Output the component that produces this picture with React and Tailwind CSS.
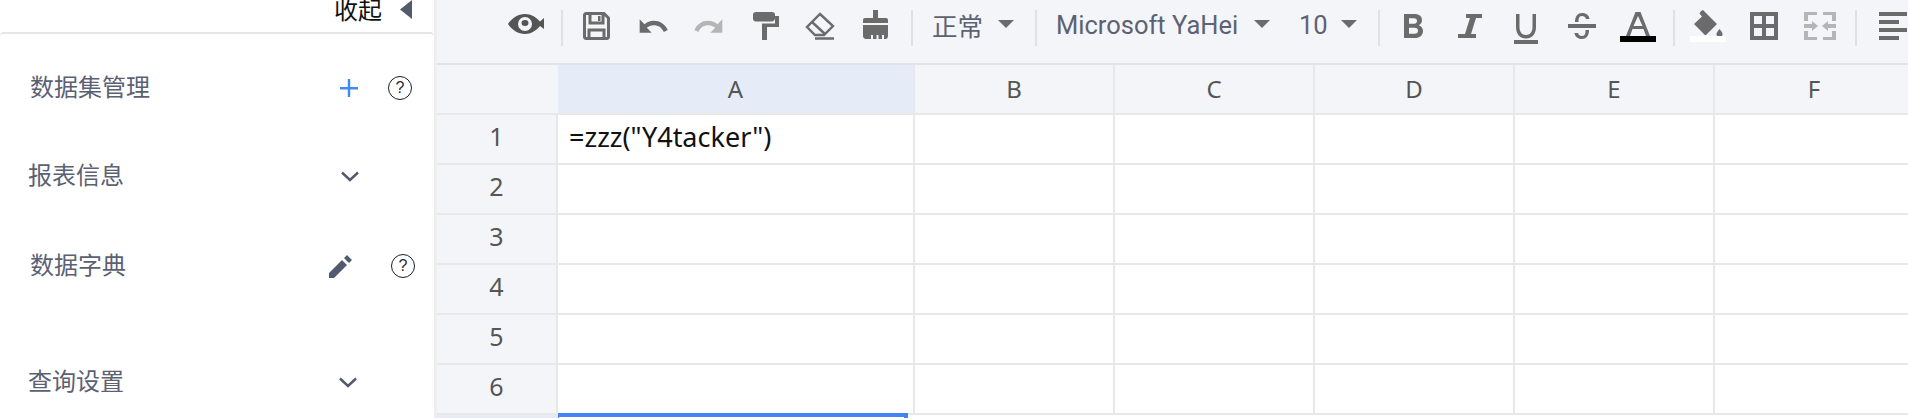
import React from "react";

const ICON = "#6b6b6b";

const Sep = ({ className }) => <div className={`w-[2px] h-[36px] bg-[#e0e1e4] shrink-0 ${className}`} />;

const Ic = ({ w, h, vb, className = "", fill = ICON, children }) => (
  <svg width={w} height={h} viewBox={vb} fill={fill} className={`shrink-0 ${className}`}>{children}</svg>
);

const Caret = ({ className }) => (
  <Ic w={16} h={8} vb="0 0 16 8" className={className} fill="#6b6b6b"><path d="M0 0h16L8 8z" /></Ic>
);

const Question = ({ className }) => (
  <div className={`w-[24px] h-[24px] rounded-full border border-[#1c1c28] flex items-center justify-center text-[16px] leading-none text-[#2a2a35] shrink-0 font-['Liberation_Sans',sans-serif] ${className}`}>?</div>
);

const Chevron = ({ className }) => (
  <svg width="18" height="11" viewBox="0 0 18 11" fill="none" stroke="#525a6e" strokeWidth="2.4" className={`shrink-0 ${className}`}><path d="M1 1.5l8 7.5 8-7.5" /></svg>
);

function Toolbar() {
  return (
    <div className="h-[65px] bg-[#f4f5f8] border-b-2 border-[#e2e3e6] flex items-start overflow-hidden font-['Roboto',sans-serif] text-[25.5px] text-[#5c6272] whitespace-nowrap">
      <Ic w={36} h={22} vb="0 0 36 22" className="ml-[71px] mt-[13px]" fill="#555555">
        <path d="M17 1C10 1 4 5 0 11c4 6 10 10 17 10 6 0 11-3.500 15-8l4 3V5l-4 3.500C28 4 23 1 17 1zm0 17a7 7 0 110-14 7 7 0 010 14zm-3.500-8a3.500 3 0 107 0 3.500 3 0 00-7 0z" />
      </Ic>
      <Sep className="ml-[17px] mt-[10px]" />
      <Ic w={27} h={28} vb="0 0 27 28" className="ml-[20px] mt-[12px]" fill="none">
        <path d="M3 1.500h18l4.500 4.500v19a1.500 1.500 0 01-1.500 1.500H3A1.500 1.500 0 011.500 25V3A1.500 1.500 0 013 1.500z" stroke={ICON} strokeWidth="3" />
        <path d="M7 2v9h13V2M6 27v-9h15v9" stroke={ICON} strokeWidth="3" />
        <path d="M15 4h2.500v5H15z" fill={ICON} />
      </Ic>
      <Ic w={32} h={16} vb="0 0 24 12" className="ml-[27px] mt-[18px]">
        <path d="M12.500 2C9.850 2 7.450 2.990 5.600 4.600L2 1v10h9L7.380 7.380C8.770 6.220 10.540 5.500 12.500 5.500c3.540 0 5.800 1.500 7.600 5l3-1.500C21 4.500 17.150 2 12.500 2z" />
      </Ic>
      <Ic w={32} h={16} vb="0 0 24 12" className="ml-[24px] mt-[18px]" fill="#b5b5b5">
        <path d="M18.400 4.600C16.550 2.990 14.150 2 11.500 2 6.850 2 3 4.500 1 9l3 1.500c1.800-3.500 4-5 7.500-5 1.950 0 3.730.72 5.120 1.880L13 11h9V1l-3.600 3.600z" />
      </Ic>
      <Ic w={26} h={28} vb="0 0 26 28" className="ml-[28px] mt-[12px]">
        <path d="M3 0h16a3 3 0 013 3v1H26v11H14v13H9V11.500h13V7h-.200A3 3 0 0119 9.500H3a3 3 0 01-3-3V3a3 3 0 013-3z" />
      </Ic>
      <Ic w={30} h={28} vb="0 0 30 28" className="ml-[26px] mt-[12px]" fill="none">
        <path d="M15 2L28 14 19 23H10L2 15z" stroke={ICON} strokeWidth="2.400" />
        <path d="M7 10l13 12M10 26.500h19" stroke={ICON} strokeWidth="2.400" />
      </Ic>
      <Ic w={25} h={29} vb="0 0 25 29" className="ml-[28px] mt-[10px]">
        <path d="M10 0h5v8h8a2 2 0 012 2v3H0v-3a2 2 0 012-2h8zM0 15h25v11c0 1.500-1 3-2 3h-2v-4h-2v4h-3.500v-4h-2v4H10v-4H8v4H3c-2 0-3-1.500-3-3z" />
      </Ic>
      <Sep className="ml-[23px] mt-[10px]" />
      <span className="ml-[19px] mt-[8px] leading-[34px] w-[51px] font-['Noto_Sans_CJK_SC',sans-serif]">正常</span>
      <Caret className="ml-[15px] mt-[20px]" />
      <Sep className="ml-[21px] mt-[10px]" />
      <span className="ml-[19px] mt-[10px] leading-[30px] w-[183px]">Microsoft YaHei</span>
      <Caret className="ml-[15px] mt-[20px]" />
      <span className="ml-[29px] mt-[10px] leading-[30px] w-[27px]">10</span>
      <Caret className="ml-[15px] mt-[20px]" />
      <Sep className="ml-[21px] mt-[10px]" />
      <Ic w={19} h={24} vb="0 0 19 24" className="ml-[24px] mt-[14px]">
        <path fillRule="evenodd" d="M0 0h10.500C15 0 18 2.200 18 6c0 2.500-1.200 4.200-3.200 5.200C17.500 12.200 19 14.300 19 17c0 4.500-3.500 7-8 7H0zm5 4.200v5.600h5c2 0 3-1.200 3-2.800S12 4.200 10 4.200zm0 9.600v6h5.500c2.300 0 3.500-1.300 3.500-3s-1.200-3-3.500-3z" />
      </Ic>
      <Ic w={24} h={24} vb="0 0 24 24" className="ml-[35px] mt-[14px]">
        <path d="M8 0h16v4h-6l-5 16h5v4H0v-4h7l5-16H8z" />
      </Ic>
      <Ic w={24} h={30} vb="0 0 24 30" className="ml-[32px] mt-[14px]">
        <path d="M2 0h3.500v13c0 5 2.500 8 6.500 8s6.500-3 6.500-8V0H22v13c0 7-4 11.500-10 11.500S2 20 2 13zM0 26h24v4H0z" />
      </Ic>
      <Ic w={28} h={26} vb="0 0 28 26" className="ml-[30px] mt-[13px]" >
        <path d="M0 11h28v4H0z" />
        <path d="M7 9c0-6 3-9 7-9 4.500 0 7 2.500 7.500 6H18c-.5-2-2-3-4-3-2.500 0-3.500 2-3.500 4.500V9zM21 17c0 6-3 9-7 9-4.500 0-7-2.500-7.500-6H10c.5 2 2 3 4 3 2.500 0 3.500-2 3.500-4.500V17z" />
      </Ic>
      <Ic w={36} h={30} vb="0 0 36 30" className="ml-[24px] mt-[12px]">
        <path fillRule="evenodd" d="M15.500 0h5L30 24h-4l-2.500-7h-11L10 24H6zM18 4l-4.500 10h9z" />
        <path d="M0 24h36v6H0z" fill="#000" />
      </Ic>
      <Sep className="ml-[17px] mt-[10px]" />
      <Ic w={36} h={32} vb="0 0 36 32" className="ml-[15px] mt-[10px]">
        <path d="M11 1l2-1 14 14-10.500 10.500a1.500 1.500 0 01-2.100 0L4 14 12 6.500 9.500 3.500z" />
        <path d="M29.500 19s3 3.300 3 5a3 3 0 01-6 0c0-1.700 3-5 3-5z" />
        <path d="M0 26h36v6H0z" fill="#fff" />
      </Ic>
      <Ic w={28} h={28} vb="0 0 28 28" className="ml-[24px] mt-[12px]">
        <path fillRule="evenodd" d="M0 0h28v28H0zM4 4v8h8V4zm12 0v8h8V4zM4 16v8h8v-8zm12 0v8h8v-8z" />
      </Ic>
      <Ic w={32} h={28} vb="0 0 32 28" className="ml-[26px] mt-[12px]" fill="#b5b5b5">
        <path d="M0 0h13v3H4v6H0zM19 0h13v9h-4V3h-9zM0 19h4v6h9v3H0zM28 19h4v9H19v-3h9zM0 12h8V9l6 5-6 5v-3H0zM32 12h-8V9l-6 5 6 5v-3h8z" />
      </Ic>
      <Sep className="ml-[19px] mt-[10px]" />
      <Ic w={28} h={28} vb="0 0 28 28" className="ml-[22px] mt-[12px]">
        <path d="M0 0h28v4H0zM0 8h20v4H0zM0 16h28v4H0zM0 24h20v4H0z" />
      </Ic>
    </div>
  );
}

const COLS = ["A", "B", "C", "D", "E", "F"];
const ROWS = [1, 2, 3, 4, 5, 6];

function Grid() {
  return (
    <div className="grid grid-cols-[121px_357px_200px_200px_200px_200px_200px] auto-rows-[50px] font-['Noto_Sans',sans-serif] text-[24px] text-[#555555]">
      <div className="bg-[#f4f5f8] border-b-2 border-[#e8e8e8]" />
      {COLS.map((c, i) => (
        <div key={c} className={`flex items-center justify-center border-b-2 border-r-2 border-[#e8e8e8] ${i === 0 ? "bg-[#e6ecf7]" : "bg-[#f4f5f8]"}`}>{c}</div>
      ))}
      {ROWS.map((r) => (
        <React.Fragment key={r}>
          <div className="flex items-center justify-center bg-[#f4f5f8] border-b-2 border-r-2 border-[#e8e8e8] pb-[4px] text-[25px]">{r}</div>
          {COLS.map((c, i) => (
            <div key={c} className="flex items-center border-b-2 border-r-2 border-[#e8e8e8] bg-white pl-[11px] pb-[4px] text-[27px] text-[#111111] whitespace-nowrap">
              {r === 1 && i === 0 ? '=zzz("Y4tacker")' : ""}
            </div>
          ))}
        </React.Fragment>
      ))}
      <div className="bg-[#e6ecf7] border-r-2 border-[#e8e8e8]" />
      <div className="border-t-4 border-l border-r-4 border-[#4285f4] -mt-[2px] mr-[7px] bg-white" />
    </div>
  );
}

const Row = ({ h, children }) => <div className={`flex items-center ${h}`}>{children}</div>;

const Label = ({ className, children }) => (
  <span className={`text-[24px] leading-none text-[#5b6172] pb-[5px] ${className}`}>{children}</span>
);

function Sidebar() {
  return (
    <div className="w-[437px] h-[418px] shrink-0 border-r-[3px] border-[#eeeeee] overflow-hidden font-['Noto_Sans_CJK_SC',sans-serif]">
      <div className="h-[32px] flex items-start">
        <span className="ml-[334px] text-[24px] leading-none -mt-[3px] text-[#111111] whitespace-nowrap">收起</span>
        <svg width="12" height="19" viewBox="0 0 12 19" className="ml-[18px]"><path d="M12 0v19L0 9.500z" fill="#525a6e" /></svg>
      </div>
      <div className="border-t-2 border-[#e6e6e6] rounded-t-[4px]">
        <Row h="h-[108px]">
          <Label className="ml-[30px] w-[120px]">数据集管理</Label>
          <svg width="18" height="18" viewBox="0 0 18 18" className="ml-[190px]"><path d="M0 8h18v2.400H0zM7.800 0h2.400v18H7.800z" fill="#3d8bf2" /></svg>
          <Question className="ml-[30px]" />
        </Row>
        <Row h="h-[68px]">
          <Label className="ml-[28px] w-[96px]">报表信息</Label>
          <Chevron className="ml-[217px]" />
        </Row>
        <Row h="h-[112px]">
          <Label className="ml-[30px] w-[96px]">数据字典</Label>
          <svg width="23" height="23" viewBox="0 0 23 23" className="ml-[203px]"><path d="M0 18l13-13 5 5L5 23H0zM15 3l3-3 5 5-3 3z" fill="#525a6e" /></svg>
          <Question className="ml-[39px]" />
        </Row>
        <Row h="h-[120px]">
          <Label className="ml-[28px] w-[96px]">查询设置</Label>
          <Chevron className="ml-[215px]" />
        </Row>
      </div>
    </div>
  );
}

export default function App() {
  return (
    <div className="w-[1908px] h-[418px] overflow-hidden flex bg-white">
      <Sidebar />
      <div className="w-[1471px] min-w-0 overflow-hidden">
        <Toolbar />
        <Grid />
      </div>
    </div>
  );
}
